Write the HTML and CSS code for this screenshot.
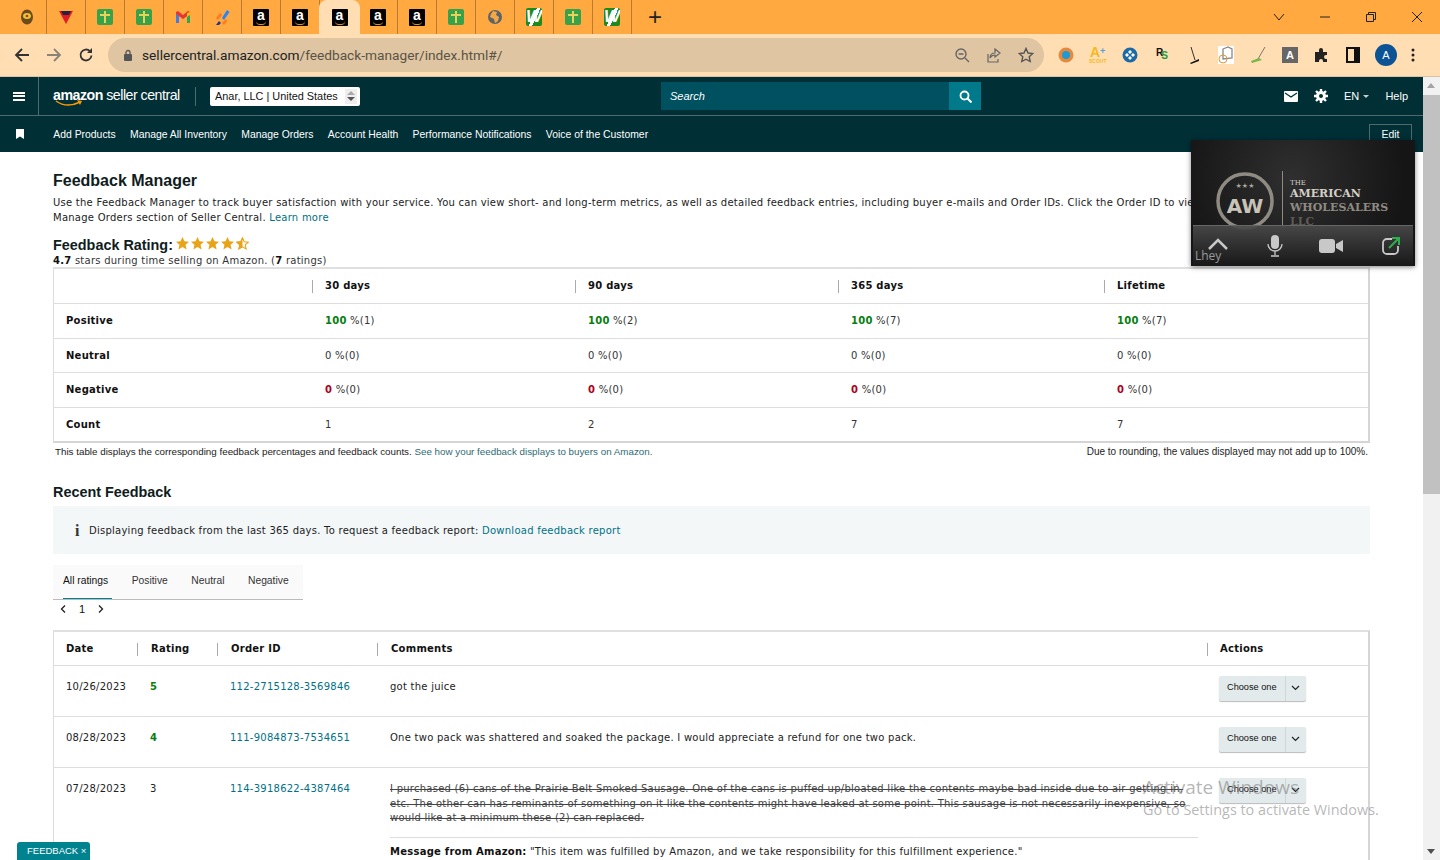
FILE: index.html
```html
<!DOCTYPE html>
<html lang="en">
<head>
    <meta charset="UTF-8">
    <title>Feedback Manager</title>
    <link rel="stylesheet" href="styles.css">
</head>
<body>

<!-- browser tabs -->
<div class="tabstrip">
    <div class="tab"><svg class="fav" viewBox="0 0 16 16"><ellipse cx="8" cy="8" rx="6" ry="7.500" fill="#6b4a1e"/><ellipse cx="8" cy="7" rx="4" ry="3" fill="#e9c531"/><circle cx="8" cy="7" r="1.300" fill="#a33"/></svg></div>
    <div class="tab"><svg class="fav" viewBox="0 0 16 16"><path d="M1 2h14L8 15z" fill="#e01c24"/><path d="M3 2h10l-2 4H5z" fill="#2a2140"/></svg></div>
    <div class="tab"><span class="fav-green"></span></div>
    <div class="tab"><span class="fav-green"></span></div>
    <div class="tab"><svg class="fav" viewBox="0 0 16 16"><path d="M1 14V3l3 1v10z" fill="#3f7ee8"/><path d="M15 14V3l-3 1v10z" fill="#2da94f"/><path d="M1 3l2-1 5 4 5-4 2 1v2l-7 5-7-5z" fill="#e5392f"/><path d="M12 4l3-1v3l-3 2z" fill="#f6b70f"/></svg></div>
    <div class="tab"><svg class="fav" viewBox="0 0 16 16"><path d="M8 9l5-8 2.500 2-5.500 8z" fill="#2684ff"/><path d="M2 9l4-5 2 2-4 5z" fill="#ff7a1a"/><path d="M2 16l3-4 2 2-2 2z" fill="#1b3a8c"/><path d="M8 14l4-4 1 2-3 4z" fill="#ff7a1a"/></svg></div>
    <div class="tab"><span class="fav-amazon">a</span></div>
    <div class="tab"><span class="fav-amazon">a</span></div>
    <div class="tab active"><span class="fav-amazon">a</span></div>
    <div class="tab"><span class="fav-amazon">a</span></div>
    <div class="tab"><span class="fav-amazon">a</span></div>
    <div class="tab"><span class="fav-green"></span></div>
    <div class="tab"><svg class="fav" viewBox="0 0 16 16"><circle cx="8" cy="8" r="7" fill="#5f6368"/><path d="M6 2l4 1-1 3 3 2-1 4-3 2-1-4-4-2 1-3z" fill="#f3a846"/></svg></div>
    <div class="tab"><span class="fav-w">W</span></div>
    <div class="tab"><span class="fav-green"></span></div>
    <div class="tab"><span class="fav-w">W</span></div>
    <div class="tab-plus">+</div>
    <div class="window-btns">
        <svg width="12" height="12" viewBox="0 0 12 12"><path d="M1 3l5 6 5-6" fill="none" stroke="#222"/></svg>
        <svg width="12" height="12" viewBox="0 0 12 12"><path d="M1 6h10" stroke="#222"/></svg>
        <svg width="12" height="12" viewBox="0 0 12 12"><path d="M1.500 3.500h7v7h-7zM3.500 3.500v-2h7v7h-2" fill="none" stroke="#222"/></svg>
        <svg width="12" height="12" viewBox="0 0 12 12"><path d="M1 1l10 10M11 1L1 11" stroke="#222"/></svg>
    </div>
</div>

<!-- address bar -->
<div class="toolbar">
    <svg class="tool-btn" viewBox="0 0 18 18"><path d="M16 9H3M9 3L3 9l6 6" fill="none" stroke="#333" stroke-width="1.800"/></svg>
    <svg class="tool-btn" viewBox="0 0 18 18"><path d="M2 9h13M9 3l6 6-6 6" fill="none" stroke="#8a8378" stroke-width="1.800"/></svg>
    <svg class="tool-btn" viewBox="0 0 18 18"><path d="M14.500 9.500a5.500 5.500 0 1 1-1.600-4.400" fill="none" stroke="#333" stroke-width="1.800"/><path d="M15 2v5h-5z" fill="#333"/></svg>
    <div class="omnibox">
        <svg width="10" height="12" viewBox="0 0 10 12"><rect x="1" y="5" width="8" height="7" rx="1" fill="#555"/><path d="M3 5V3.500a2 2 0 0 1 4 0V5" fill="none" stroke="#555" stroke-width="1.300"/></svg>
        <span class="url"><b>sellercentral.amazon.com</b>/feedback-manager/index.html#/</span>
        <div class="omni-icons">
            <svg width="16" height="16" viewBox="0 0 16 16"><circle cx="7" cy="7" r="5" fill="none" stroke="#666" stroke-width="1.400"/><path d="M4.500 7h5M11 11l4 4" stroke="#666" stroke-width="1.400"/></svg>
            <svg width="16" height="16" viewBox="0 0 16 16"><path d="M2 7v8h10v-3M9 2l5 4-5 4V8c-3 0-4 1-5 3 0-3 2-5 5-5z" fill="none" stroke="#666" stroke-width="1.200"/></svg>
            <svg width="16" height="16" viewBox="0 0 16 16"><path d="M8 1.500l2 4.500 4.800.500-3.600 3.200 1 4.800L8 12.200l-4.200 2.300 1-4.800L1.200 6.500 6 6z" fill="none" stroke="#555" stroke-width="1.400"/></svg>
        </div>
    </div>
    <div class="extensions">
        <svg width="16" height="16" viewBox="0 0 16 16"><circle cx="8" cy="8" r="7.500" fill="#e58a3c"/><circle cx="8" cy="8" r="4" fill="#1c9ad6"/></svg>
        <span class="ext-scout">A<i>+</i><small>SCOUT</small></span>
        <svg width="16" height="16" viewBox="0 0 16 16"><circle cx="8" cy="8" r="7.500" fill="#1c6aa5"/><path d="M8 3l2 2-2 2-2-2zM8 9l2 2-2 2-2-2zM3 8l2-2 2 2-2 2zM9 8l2-2 2 2-2 2z" fill="#fff"/></svg>
        <span class="ext-rs">R<i>S</i></span>
        <svg width="16" height="18" viewBox="0 0 16 18"><path d="M5 1l4 13" stroke="#333"/><path d="M4 17l9-4v2l-8 3z" fill="#111"/></svg>
        <svg width="16" height="18" viewBox="0 0 16 18"><rect width="16" height="18" fill="#fff"/><path d="M5 3l5-2 4 2v9l-9 1z" fill="none" stroke="#888" stroke-width="1.300"/><circle cx="5" cy="13" r="4" fill="none" stroke="#e8963a"/></svg>
        <svg width="16" height="18" viewBox="0 0 16 18"><path d="M15 1L8 13" stroke="#777"/><path d="M1 15l8-3 3 2-10 3z" fill="#7ab648"/></svg>
        <span class="ext-a">A</span>
        <svg width="16" height="16" viewBox="0 0 16 16"><path d="M1 5h4V3a2 2 0 0 1 4 0v2h4v3h-1a2 2 0 0 0 0 4h1v3H9v-1a2 2 0 0 0-4 0v1H1z" fill="#222"/></svg>
        <svg width="14" height="16" viewBox="0 0 14 16"><path d="M1 1h12v14H1z" fill="none" stroke="#111" stroke-width="2"/><path d="M8 1h5v14H8z" fill="#111"/></svg>
        <span class="avatar">A</span>
        <svg width="4" height="16" viewBox="0 0 4 16"><circle cx="2" cy="3" r="1.500" fill="#222"/><circle cx="2" cy="8" r="1.500" fill="#222"/><circle cx="2" cy="13" r="1.500" fill="#222"/></svg>
    </div>
</div>

<div class="viewport">
    <div class="page">
        <!-- seller central header -->
        <div class="topbar">
            <div class="menu-cell"><span class="burger"></span></div>
            <div class="logo">
                <span class="logo-text"><b>amazon</b> seller central</span>
                <svg class="smile" width="30" height="7" viewBox="0 0 30 7"><path d="M1 1c7 5 16 5 24 1" fill="none" stroke="#ff9900" stroke-width="1.500"/><path d="M22 0l5 1-2 4z" fill="#ff9900"/></svg>
            </div>
            <div class="account-select">
                <span>Anar, LLC | United States</span>
                <span class="spin"><i class="up"></i><i class="down"></i></span>
            </div>
            <div class="search">
                <span class="search-input">Search</span>
                <span class="search-btn"><svg width="13" height="13" viewBox="0 0 13 13"><circle cx="5.500" cy="5.500" r="4" fill="none" stroke="#fff" stroke-width="1.800"/><path d="M8.500 8.500l4 4" stroke="#fff" stroke-width="2"/></svg></span>
            </div>
            <div class="top-right">
                <svg width="14" height="11" viewBox="0 0 14 11"><rect width="14" height="11" rx="1" fill="#fff"/><path d="M1 2l6 4 6-4" fill="none" stroke="#002f36" stroke-width="1.300"/></svg>
                <svg width="14" height="14" viewBox="0 0 14 14"><circle cx="7" cy="7" r="3.500" fill="none" stroke="#fff" stroke-width="3"/><path d="M7 0v3M7 11v3M0 7h3M11 7h3M2 2l2 2M10 10l2 2M12 2l-2 2M4 10l-2 2" stroke="#fff" stroke-width="2.400"/></svg>
                <span class="lang">EN <i></i></span>
                <span class="help">Help</span>
            </div>
        </div>
        <div class="navbar">
            <svg class="bookmark" width="8" height="10" viewBox="0 0 8 10"><path d="M0 0h8v10L4 7.500 0 10z" fill="#fff"/></svg>
            <a>Add Products</a>
            <a>Manage All Inventory</a>
            <a>Manage Orders</a>
            <a>Account Health</a>
            <a>Performance Notifications</a>
            <a>Voice of the Customer</a>
            <span class="edit-btn">Edit</span>
        </div>

        <div class="content">
            <h1>Feedback Manager</h1>
            <p class="intro">Use the Feedback Manager to track buyer satisfaction with your service. You can view short- and long-term metrics, as well as detailed feedback entries, including buyer e-mails and Order IDs. Click the Order ID to view more details in the<br>Manage Orders section of Seller Central. <a>Learn more</a></p>

            <div class="rating-head">
                <h2>Feedback Rating:</h2>
                <div class="stars">
                    <svg viewBox="0 0 12 12"><path class="star" d="M6 0l1.800 4 4.200.4-3.200 2.800 1 4.300L6 9.300l-3.800 2.200 1-4.300L0 4.400 4.200 4z"/></svg>
                    <svg viewBox="0 0 12 12"><path class="star" d="M6 0l1.800 4 4.200.4-3.200 2.800 1 4.300L6 9.300l-3.800 2.200 1-4.300L0 4.400 4.200 4z"/></svg>
                    <svg viewBox="0 0 12 12"><path class="star" d="M6 0l1.800 4 4.200.4-3.200 2.800 1 4.300L6 9.300l-3.800 2.200 1-4.300L0 4.400 4.200 4z"/></svg>
                    <svg viewBox="0 0 12 12"><path class="star" d="M6 0l1.800 4 4.200.4-3.200 2.800 1 4.300L6 9.300l-3.800 2.200 1-4.300L0 4.400 4.200 4z"/></svg>
                    <svg viewBox="0 0 12 12"><path d="M6 .8l1.600 3.600 3.700.4-2.800 2.500.9 3.700L6 9.100l-3.400 1.900.9-3.700L.7 4.800l3.700-.4z" fill="none" stroke="#e8a317"/><path class="star" d="M6 0v9.300l-3.800 2.200 1-4.300L0 4.400 4.200 4z"/></svg>
                </div>
            </div>
            <p class="rating-sub"><b>4.7</b> stars during time selling on Amazon. (<b>7</b> ratings)</p>

            <!-- summary table -->
            <div class="summary">
                <div class="sum-row head">
                    <div></div>
                    <div class="col"><b>30 days</b></div>
                    <div class="col"><b>90 days</b></div>
                    <div class="col"><b>365 days</b></div>
                    <div class="col"><b>Lifetime</b></div>
                </div>
                <div class="sum-row">
                    <div><b>Positive</b></div>
                    <div><b class="good">100</b> %(1)</div>
                    <div><b class="good">100</b> %(2)</div>
                    <div><b class="good">100</b> %(7)</div>
                    <div><b class="good">100</b> %(7)</div>
                </div>
                <div class="sum-row">
                    <div><b>Neutral</b></div>
                    <div>0 %(0)</div>
                    <div>0 %(0)</div>
                    <div>0 %(0)</div>
                    <div>0 %(0)</div>
                </div>
                <div class="sum-row">
                    <div><b>Negative</b></div>
                    <div><b class="bad">0</b> %(0)</div>
                    <div><b class="bad">0</b> %(0)</div>
                    <div><b class="bad">0</b> %(0)</div>
                    <div><b class="bad">0</b> %(0)</div>
                </div>
                <div class="sum-row">
                    <div><b>Count</b></div>
                    <div>1</div>
                    <div>2</div>
                    <div>7</div>
                    <div>7</div>
                </div>
            </div>
            <div class="sum-notes">
                <span class="note-left">This table displays the corresponding feedback percentages and feedback counts. <a>See how your feedback displays to buyers on Amazon.</a></span>
                <span>Due to rounding, the values displayed may not add up to 100%.</span>
            </div>

            <h2 class="recent">Recent Feedback</h2>
            <div class="notice">
                <span class="info-i">i</span>
                <span>Displaying feedback from the last 365 days. To request a feedback report: <a>Download feedback report</a></span>
            </div>

            <div class="tabs">
                <span class="current">All ratings</span>
                <span>Positive</span>
                <span>Neutral</span>
                <span>Negative</span>
            </div>
            <div class="pager">
                <svg width="6" height="8" viewBox="0 0 6 8"><path d="M5 .5L1.500 4 5 7.500" fill="none" stroke="#222" stroke-width="1.300"/></svg>
                <span>1</span>
                <svg width="6" height="8" viewBox="0 0 6 8"><path d="M1 .5L4.500 4 1 7.500" fill="none" stroke="#222" stroke-width="1.300"/></svg>
            </div>

            <!-- feedback list -->
            <div class="feedback">
                <div class="fb-row head">
                    <div><b>Date</b></div>
                    <div class="col"><b>Rating</b></div>
                    <div class="col"><b>Order ID</b></div>
                    <div class="col"><b>Comments</b></div>
                    <div class="col"><b>Actions</b></div>
                </div>
                <div class="fb-row">
                    <div>10/26/2023</div>
                    <div><b class="good">5</b></div>
                    <div><a>112-2715128-3569846</a></div>
                    <div>got the juice</div>
                    <div><span class="choose"><span>Choose one</span><span class="caret"><svg width="9" height="6" viewBox="0 0 9 6"><path d="M1 1l3.500 3.500L8 1" fill="none" stroke="#222" stroke-width="1.200"/></svg></span></span></div>
                </div>
                <div class="fb-row">
                    <div>08/28/2023</div>
                    <div><b class="good">4</b></div>
                    <div><a>111-9084873-7534651</a></div>
                    <div>One two pack was shattered and soaked the package. I would appreciate a refund for one two pack.</div>
                    <div><span class="choose"><span>Choose one</span><span class="caret"><svg width="9" height="6" viewBox="0 0 9 6"><path d="M1 1l3.500 3.500L8 1" fill="none" stroke="#222" stroke-width="1.200"/></svg></span></span></div>
                </div>
                <div class="fb-row last">
                    <div>07/28/2023</div>
                    <div>3</div>
                    <div><a>114-3918622-4387464</a></div>
                    <div>
                        <p class="struck">I purchased (6) cans of the Prairie Belt Smoked Sausage. One of the cans is puffed up/bloated like the contents maybe bad inside due to air getting in,<br>etc. The other can has reminants of something on it like the contents might have leaked at some point. This sausage is not necessarily inexpensive, so<br>would like at a minimum these (2) can replaced.</p>
                        <p class="amazon-msg"><b>Message from Amazon:</b> "This item was fulfilled by Amazon, and we take responsibility for this fulfillment experience."</p>
                    </div>
                    <div><span class="choose"><span>Choose one</span><span class="caret"><svg width="9" height="6" viewBox="0 0 9 6"><path d="M1 1l3.500 3.500L8 1" fill="none" stroke="#222" stroke-width="1.200"/></svg></span></span></div>
                </div>
            </div>
        </div>
    </div>
    <div class="scrollbar">
        <i class="arrow-up"></i>
        <div class="thumb"></div>
        <i class="arrow-down"></i>
    </div>
</div>

<!-- floating meeting window -->
<div class="meeting">
    <div class="meet-logo">
        <svg width="60" height="60" viewBox="0 0 60 60"><circle cx="30" cy="30" r="27" fill="none" stroke="#8f8a82" stroke-width="3.500"/><text x="30" y="42" text-anchor="middle" class="awl">AW</text><text x="30" y="17" text-anchor="middle" class="awl-stars">★★★</text></svg>
        <div class="meet-name">
            <small>THE</small>
            <b>AMERICAN</b>
            <b class="dim">WHOLESALERS</b>
            <b class="dimmer">LLC</b>
        </div>
    </div>
    <div class="meet-bar">
        <svg width="22" height="12" viewBox="0 0 22 12"><path d="M2 11l9-9 9 9" fill="none" stroke="#c8c8c8" stroke-width="2.500"/></svg>
        <svg width="16" height="22" viewBox="0 0 16 22"><rect x="4" y="0" width="8" height="14" rx="4" fill="#c8c8c8"/><path d="M1 9a7 7 0 0 0 14 0M8 16v4M4 21h8" fill="none" stroke="#c8c8c8" stroke-width="1.300"/></svg>
        <svg width="24" height="14" viewBox="0 0 24 14"><rect width="16" height="14" rx="3" fill="#c8c8c8"/><path d="M17 5l7-4v12l-7-4z" fill="#c8c8c8"/></svg>
        <svg width="20" height="20" viewBox="0 0 20 20"><path d="M11 3H6a4 4 0 0 0-4 4v7a4 4 0 0 0 4 4h7a4 4 0 0 0 4-4V10" fill="none" stroke="#c8c8c8" stroke-width="1.800"/><path d="M8 12L17 3M11 2h7v7" fill="none" stroke="#2fae4e" stroke-width="2"/></svg>
    </div>
    <span class="meet-user">Lhey</span>
</div>

<div class="activate">
    <div class="act-title">Activate Windows</div>
    <div class="act-sub">Go to Settings to activate Windows.</div>
</div>

<div class="feedback-tab">FEEDBACK ×</div>

</body>
</html>
```

FILE: styles.css
```css
* {
    box-sizing: border-box;
}
html, body {
    margin: 0;
    height: 860px;
    overflow: hidden;
}
body {
    font-family: "DejaVu Sans", Verdana, sans-serif;
    font-size: 10px;
    color: #111;
    background: #fff;
}
a {
    color: #007185;
}
h1, h2, p {
    margin: 0;
}

/* browser chrome */
.tabstrip {
    display: flex;
    align-items: center;
    height: 34px;
    padding-left: 8px;
    background: #ffa940;
}
.tab {
    display: flex;
    align-items: center;
    justify-content: center;
    width: 39px;
    height: 34px;
    border-right: 1px solid #b87a35;
}
.tab.active {
    width: 41px;
    margin-left: -1px;
    margin-right: -1px;
    border-right: 0;
    border-radius: 8px 8px 0 0;
    background: #ffdeb4;
    position: relative;
}
.fav {
    width: 16px;
    height: 16px;
}
.fav-green {
    position: relative;
    width: 16px;
    height: 16px;
    border-radius: 2px;
    background: #38a24a;
}
.fav-green::before {
    content: "";
    position: absolute;
    left: 7px;
    top: 2px;
    width: 2px;
    height: 12px;
    background: #e8d25a;
}
.fav-green::after {
    content: "";
    position: absolute;
    left: 3px;
    top: 5px;
    width: 10px;
    height: 2px;
    background: #e8d25a;
}
.fav-amazon {
    position: relative;
    width: 16px;
    height: 17px;
    background: #000;
    color: #fff;
    font: bold 14px/13px "Liberation Sans", sans-serif;
    text-align: center;
    border-radius: 1px;
}
.fav-amazon::after {
    content: "";
    position: absolute;
    left: 3px;
    bottom: 1px;
    width: 10px;
    height: 3px;
    border-bottom: 1px solid #e8911c;
    border-radius: 0 0 6px 6px;
}
.fav-w {
    width: 16px;
    height: 18px;
    background: linear-gradient(115deg, #1e8a1e 45%, #fff 45%, #fff 60%, #1e8a1e 60%);
    color: #fff;
    font: italic bold 17px/18px "Liberation Sans", sans-serif;
    text-align: center;
    border-radius: 2px;
    overflow: hidden;
}
.tab-plus {
    width: 46px;
    text-align: center;
    font: 24px/24px "Liberation Sans", sans-serif;
    color: #222;
}
.window-btns {
    display: flex;
    gap: 34px;
    margin-left: auto;
    padding-right: 17px;
}
.toolbar {
    display: flex;
    align-items: center;
    height: 43px;
    padding-left: 13px;
    background: #ffdeb4;
    border-bottom: 1px solid #d9c3a2;
}
.tool-btn {
    width: 18px;
    height: 18px;
    margin-right: 14px;
}
.omnibox {
    display: flex;
    align-items: center;
    gap: 9px;
    width: 936px;
    height: 34px;
    margin-left: -1px;
    padding: 0 10px 0 15px;
    border-radius: 17px;
    background: #dfc5a1;
}
.url {
    font: 13.700px "Roboto", "Liberation Sans", sans-serif;
    color: #5a5346;
}
.url b {
    font-weight: 400;
    color: #222;
}
.omni-icons {
    display: flex;
    gap: 16px;
    margin-left: auto;
}
.extensions {
    display: flex;
    align-items: center;
    gap: 16px;
    margin-left: 14px;
}
.ext-scout {
    position: relative;
    width: 16px;
    height: 18px;
    color: #f5b81c;
    font: bold 14px/13px "Liberation Sans", sans-serif;
}
.ext-scout i {
    position: absolute;
    left: 10px;
    top: -1px;
    font-size: 9px;
    font-style: normal;
    color: #4aa3d8;
}
.ext-scout small {
    position: absolute;
    left: -1px;
    top: 12px;
    font-size: 5px;
    line-height: 6px;
}
.ext-rs {
    width: 16px;
    height: 16px;
    padding-left: 2px;
    font: bold 10px/12px "Liberation Sans", sans-serif;
    color: #111;
}
.ext-rs i {
    position: relative;
    top: 3px;
    margin-left: -2px;
    font-style: normal;
    color: #1e9a3c;
}
.ext-a {
    width: 16px;
    height: 16px;
    background: #666;
    color: #fff;
    font: bold 11px/16px "Liberation Sans", sans-serif;
    text-align: center;
}
.avatar {
    width: 22px;
    height: 22px;
    margin: 0 -2px 0 -1px;
    border-radius: 50%;
    background: #0b5394;
    color: #fff;
    font: 11px/22px "Liberation Sans", sans-serif;
    text-align: center;
}

/* page */
.viewport {
    display: flex;
    height: 783px;
}
.page {
    flex: 1;
    min-width: 0;
    overflow: hidden;
}
.scrollbar {
    position: relative;
    width: 17px;
    background: #f1f1f1;
}
.thumb {
    position: absolute;
    left: 0;
    top: 18px;
    width: 17px;
    height: 399px;
    background: #c1c1c1;
}
.arrow-up, .arrow-down {
    position: absolute;
    left: 4px;
    width: 0;
    height: 0;
    border-left: 4px solid transparent;
    border-right: 4px solid transparent;
}
.arrow-up {
    top: 6px;
    border-bottom: 5px solid #a3a3a3;
}
.arrow-down {
    bottom: 6px;
    border-top: 5px solid #505050;
}

/* seller central header */
.topbar {
    display: flex;
    align-items: center;
    height: 39px;
    background: #002f36;
    border-bottom: 1px solid #50696d;
    color: #fff;
}
.menu-cell {
    display: flex;
    align-items: center;
    justify-content: center;
    width: 39px;
    height: 38px;
    border-right: 1px solid #50696d;
}
.burger {
    width: 12px;
    height: 9px;
    border-top: 2px solid #fff;
    border-bottom: 2px solid #fff;
    position: relative;
}
.burger::after {
    content: "";
    position: absolute;
    left: 0;
    right: 0;
    top: 1.500px;
    height: 2px;
    background: #fff;
}
.logo {
    position: relative;
    width: 143px;
    margin-left: 14px;
    padding-bottom: 2px;
}
.logo-text {
    font: 14.200px "Liberation Sans", sans-serif;
    letter-spacing: -0.5px;
    white-space: nowrap;
}
.logo-text b {
    color: #fff;
}
.smile {
    position: absolute;
    left: 2px;
    bottom: -2px;
}
.account-select {
    display: flex;
    align-items: center;
    justify-content: space-between;
    width: 150px;
    height: 19px;
    margin-left: 14px;
    padding: 0 3px 0 5px;
    border-radius: 2px;
    background: #fff;
    color: #111;
    font: 10.900px "Liberation Sans", sans-serif;
    position: relative;
}
.account-select::before {
    content: "";
    position: absolute;
    left: -15px;
    top: 0;
    height: 19px;
    border-left: 1px solid #50696d;
}
.spin {
    display: flex;
    flex-direction: column;
    justify-content: center;
    gap: 2px;
    height: 15px;
    padding: 0 2px;
    background: #eee;
}
.spin i {
    width: 0;
    height: 0;
    border-left: 4px solid transparent;
    border-right: 4px solid transparent;
}
.spin .up {
    border-bottom: 4px solid #aaa;
}
.spin .down {
    border-top: 4px solid #555;
}
.search {
    display: flex;
    width: 320px;
    height: 28px;
    margin-left: 301px;
}
.search-input {
    flex: 1;
    padding-left: 9px;
    background: #00515f;
    color: #fff;
    font: italic 11px/28px "Liberation Sans", sans-serif;
}
.search-btn {
    display: flex;
    align-items: center;
    justify-content: center;
    width: 32px;
    background: #007a8a;
}
.top-right {
    display: flex;
    align-items: center;
    gap: 16px;
    margin-left: auto;
    padding-right: 15px;
    font: 11px "Liberation Sans", sans-serif;
}
.lang i {
    display: inline-block;
    margin-left: 1px;
    vertical-align: 2px;
    border-left: 3px solid transparent;
    border-right: 3px solid transparent;
    border-top: 3px solid #ccc;
}
.navbar {
    display: flex;
    align-items: center;
    height: 36px;
    padding-left: 16px;
    background: #002f36;
    color: #fff;
    font: 10.400px "Liberation Sans", sans-serif;
    gap: 14.300px;
    position: relative;
}
.navbar a {
    color: #fff;
}
.navbar .bookmark {
    margin-right: 15px;
}
.edit-btn {
    position: absolute;
    left: 1369px;
    top: 8px;
    width: 43px;
    height: 24px;
    padding-top: 4px;
    border: 1px solid #50696d;
    text-align: center;
}

.content {
    height: 708px;
    padding: 20px 53px 0;
    overflow: hidden;
    width: 1423px;
}
.content > * {
    width: 1317px;
}
h1 {
    font: bold 16px/18px "Liberation Sans", sans-serif;
    color: #0f1c20;
}
.intro {
    margin-top: 5px;
    line-height: 15px;
    white-space: nowrap;
    overflow: hidden;
    color: #222;
    letter-spacing: 0.25px;
}
.rating-head {
    display: flex;
    align-items: center;
    gap: 3px;
    margin-top: 12px;
}
h2 {
    font: bold 14.400px/16px "Liberation Sans", sans-serif;
    color: #0f1c20;
}
.stars {
    display: flex;
    gap: 2px;
    margin-top: -3px;
}
.stars svg {
    width: 13px;
    height: 13px;
}
.star {
    fill: #e8a317;
}
.rating-sub {
    line-height: 13px;
    margin-top: 1px;
    color: #333;
    letter-spacing: 0.25px;
}
.summary {
    margin-top: 0;
    border: 1px solid #ddd;
    border-top: 2px solid #e0e0e0;
    border-bottom: 2px solid #d5d5d5;
    border-right: 2px solid #d5d5d5;
}
.sum-row {
    display: grid;
    grid-template-columns: 258px 263px 263px 266px 1fr;
    align-items: center;
    height: 34.600px;
    border-top: 1px solid #ddd;
    color: #333;
    letter-spacing: 0.25px;
}
.sum-row > div {
    padding-left: 13px;
}
.sum-row > div:first-child {
    padding-left: 12px;
}
.sum-row.head {
    height: 34px;
    padding-bottom: 2px;
    border-top: 0;
}
b {
    color: #111;
}
.sum-row .col {
    position: relative;
}
.col::before {
    content: "";
    position: absolute;
    left: 0;
    top: 0;
    height: 13px;
    border-left: 1px solid #aaa;
}
.good {
    color: #067d0f;
}
.bad {
    color: #b00020;
}
.sum-notes {
    display: flex;
    justify-content: space-between;
    padding: 0 2px;
    margin-top: 3px;
    font: 10px/12px "Liberation Sans", sans-serif;
    color: #222;
}
.note-left {
    font-size: 9.800px;
}
.note-left a {
    color: #2f6b75;
}
.recent {
    margin-top: 26px;
}
.notice {
    display: flex;
    align-items: center;
    height: 48px;
    margin-top: 6px;
    padding: 1px 0 0 22px;
    background: #f3f7f8;
    color: #222;
    letter-spacing: 0.25px;
}
.info-i {
    width: 14px;
    font: bold 16px "Liberation Serif", serif;
    color: #333;
}
.tabs {
    display: flex;
    gap: 23.500px;
    width: 250px !important;
    height: 35px;
    margin-top: 11px;
    padding: 0 10px;
    background: #fafafa;
    border-bottom: 1px solid #bbb;
    font: 10.300px/31px "Liberation Sans", sans-serif;
    color: #333;
}
.tabs .current {
    height: 34px;
    color: #111;
    border-bottom: 1px solid #008296;
    padding-right: 4px;
    margin-right: -4px;
}
.pager {
    display: flex;
    align-items: center;
    gap: 13px;
    height: 18px;
    padding-left: 7px;
    font: 11px "Liberation Sans", sans-serif;
}
.feedback {
    margin-top: 12px;
    border: 1px solid #ddd;
    border-top: 2px solid #e0e0e0;
    border-right: 2px solid #d5d5d5;
}
.fb-row {
    display: grid;
    grid-template-columns: 83px 80px 160px 830px 1fr;
    height: 51px;
    padding-top: 15px;
    border-top: 1px solid #ddd;
    color: #222;
    letter-spacing: 0.25px;
}
.fb-row > div {
    padding-left: 13px;
    position: relative;
}
.fb-row > div:first-child {
    padding-left: 12px;
}
.fb-row.head {
    height: 33px;
    padding-top: 11px;
    border-top: 0;
}
.fb-row .col {
    padding-left: 14px;
}
.fb-row .col:last-child {
    padding-left: 13px;
}
.fb-row.last {
    height: 200px;
}
.struck {
    margin-top: -1px;
    line-height: 14.500px;
    white-space: nowrap;
    text-decoration: line-through;
    color: #444;
}
.amazon-msg {
    margin-top: 11px;
    padding-top: 8px;
    border-top: 1px solid #ddd;
    width: 808px;
    white-space: nowrap;
}
.choose {
    display: inline-flex;
    align-items: center;
    height: 25px;
    margin: -6px 0 0 -1px;
    border-radius: 2px;
    background: #e3eaeb;
    box-shadow: 0 1px 1px #bbb;
    font: 9.200px "Liberation Sans", sans-serif;
    letter-spacing: 0;
    color: #111;
    padding: 0 0 0 8px;
}
.choose > span:first-child {
    margin-bottom: 2px;
}
.caret {
    display: flex;
    align-items: center;
    justify-content: center;
    width: 21px;
    height: 25px;
    margin-left: 8px;
    border-left: 1px solid #cfd6d7;
}

/* overlays */
.meeting {
    position: absolute;
    left: 1191px;
    top: 140px;
    width: 224px;
    height: 126px;
    overflow: hidden;
    background: radial-gradient(circle at 45% 30%, #2f2f2f, #151515 75%);
    box-shadow: 0 1px 5px rgba(0, 0, 0, 0.5);
}
.meet-logo {
    display: flex;
    align-items: flex-start;
    gap: 7px;
    padding: 31px 0 0 24px;
}
.awl {
    font: bold 20px "DejaVu Sans", sans-serif;
    fill: #c9c3b8;
}
.awl-stars {
    font-size: 7px;
    fill: #a8a39a;
}
.meet-name {
    display: flex;
    flex-direction: column;
    height: 56px;
    padding-left: 7px;
    border-left: 1px solid #8f8a82;
    font: 11px/14px "DejaVu Serif", serif;
    color: #d4cfc6;
}
.meet-name small {
    font-size: 7px;
    line-height: 8px;
    margin-top: 8px;
}
.meet-name b {
    color: #d4cfc6;
}
.meet-name .dim {
    color: #8f8a82;
}
.meet-name .dimmer {
    color: #5e5a54;
}
.meet-bar {
    position: absolute;
    left: 2px;
    right: 2px;
    bottom: 0;
    display: flex;
    align-items: center;
    justify-content: space-between;
    height: 41px;
    padding: 0 12px 0 14px;
    border-top: 1px solid #666;
    background: linear-gradient(rgba(74, 74, 74, 0.9), #181818);
}
.meet-bar svg:first-child {
    margin-top: -4px;
}
.meet-bar svg:nth-child(3) {
    margin-left: -2px;
}
.meet-user {
    position: absolute;
    left: 4px;
    bottom: 2px;
    padding: 0 4px 0 0;
    font: 12px "Open Sans", sans-serif;
    color: #9a9a9a;
}
.activate {
    position: absolute;
    left: 1143px;
    top: 775px;
    width: 280px;
    font-family: "Open Sans", sans-serif;
    color: rgba(120, 120, 120, 0.55);
    white-space: nowrap;
}
.act-title {
    font-size: 19px;
    line-height: 25px;
}
.act-sub {
    font-size: 14.400px;
    line-height: 20px;
}
.feedback-tab {
    position: absolute;
    left: 17px;
    top: 842px;
    width: 73px;
    height: 18px;
    padding-left: 10px;
    border-radius: 3px 3px 0 0;
    background: #00828f;
    color: #fff;
    font: 9.500px/18px "Liberation Sans", sans-serif;
    white-space: nowrap;
}
```
